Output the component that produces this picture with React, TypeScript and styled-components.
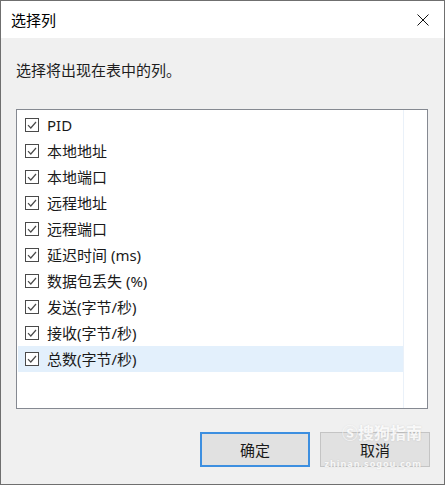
import React from "react"
import styled, { createGlobalStyle } from "styled-components"

const GlobalStyle = createGlobalStyle`
  html, body {
    margin: 0;
    padding: 0;
    background: #ffffff;
  }
  body {
    font-family: "Noto Sans", "Noto Sans CJK SC", sans-serif;
  }
`

const columns = [
  "PID",
  "本地地址",
  "本地端口",
  "远程地址",
  "远程端口",
  "延迟时间 (ms)",
  "数据包丢失 (%)",
  "发送(字节/秒)",
  "接收(字节/秒)",
  "总数(字节/秒)",
]

const Window = styled.div`
  position: relative;
  box-sizing: border-box;
  width: 445px;
  height: 485px;
  border: 1px solid #6f6f6f;
  background: #f0f0f0;
  display: flex;
  flex-direction: column;
  color: #1a1a1a;
  font-size: 15px;
`

const TitleBar = styled.div`
  height: 37px;
  background: #ffffff;
  display: flex;
  align-items: center;
  justify-content: space-between;
  padding: 0 15px 0 10px;
`

const Title = styled.span`
  font-size: 15px;
  line-height: 20px;
  color: #000;
`

const CloseIcon = () => (
  <svg width="12" height="12" viewBox="0 0 12 12">
    <path d="M0.5 0.5 L11.5 11.5 M11.5 0.5 L0.5 11.5" stroke="#111" strokeWidth="1" />
  </svg>
)

const Body = styled.div`
  flex: 1;
  display: flex;
  flex-direction: column;
  padding: 22px 16px 0 15px;
`

const Prompt = styled.div`
  line-height: 20px;
  color: #1e1e1e;
`

const ListBox = styled.div`
  box-sizing: border-box;
  margin-top: 29px;
  width: 412px;
  height: 300px;
  border: 1px solid #858991;
  background: #ffffff;
  display: flex;
`

const Rows = styled.div`
  flex: 1;
  display: flex;
  flex-direction: column;
  padding: 2px 0 0 1px;
`

const ScrollArea = styled.div`
  width: 23px;
  border-left: 1px solid #eaf1f9;
`

const Row = styled.div<{ $hover?: boolean }>`
  height: 26px;
  display: flex;
  align-items: center;
  gap: 8px;
  padding-left: 7px;
  background: ${p => (p.$hover ? "#e3f0fc" : "transparent")};
  line-height: 20px;
`

const CheckBox = () => (
  <svg width="14" height="14" viewBox="0 0 14 14">
    <rect x="0.5" y="0.5" width="13" height="13" fill="#fff" stroke="#4a4a4a" />
    <path d="M3 7.2 L5.8 10 L11 4" fill="none" stroke="#4a4a4a" strokeWidth="1.2" />
  </svg>
)

const Buttons = styled.div`
  display: flex;
  justify-content: flex-end;
  gap: 10px;
  margin-top: 23px;
  margin-right: -2px;
`

const Button = styled.button<{ $primary?: boolean }>`
  box-sizing: border-box;
  width: 110px;
  height: 35px;
  font-family: "Noto Sans", "Noto Sans CJK SC", sans-serif;
  font-size: 15px;
  color: #1a1a1a;
  background: #e1e1e1;
  border: ${p => (p.$primary ? "2px solid #3d8fe0" : "1px solid #c4c4c4")};
  padding: 0;
`

// faint site watermark laid over the cancel button
const Watermark = styled.div`
  position: absolute;
  right: 22px;
  top: 424px;
  display: flex;
  flex-direction: column;
  align-items: flex-end;
  gap: 18px;
  color: rgba(255, 255, 255, 0.85);
  text-shadow: 0 0 2px rgba(0, 0, 0, 0.12);
  pointer-events: none;
`

const MarkTitle = styled.span`
  font-size: 16px;
  line-height: 16px;
  font-weight: 700;
`

const MarkUrl = styled.span`
  font-size: 9px;
  line-height: 10px;
  letter-spacing: 1px;
  font-weight: 700;
`

const App = () => {
  return (
    <>
      <GlobalStyle />
      <Window>
        <TitleBar>
          <Title>选择列</Title>
          <CloseIcon />
        </TitleBar>
        <Body>
          <Prompt>选择将出现在表中的列。</Prompt>
          <ListBox>
            <Rows>
              {columns.map((name, i) => (
                <Row key={name} $hover={i === columns.length - 1}>
                  <CheckBox />
                  <span>{name}</span>
                </Row>
              ))}
            </Rows>
            <ScrollArea />
          </ListBox>
          <Buttons>
            <Button $primary>确定</Button>
            <Button>取消</Button>
          </Buttons>
        </Body>
        <Watermark>
          <MarkTitle>Ⓢ搜狗指南</MarkTitle>
          <MarkUrl>zhinan.sogou.com</MarkUrl>
        </Watermark>
      </Window>
    </>
  )
}

export default App
